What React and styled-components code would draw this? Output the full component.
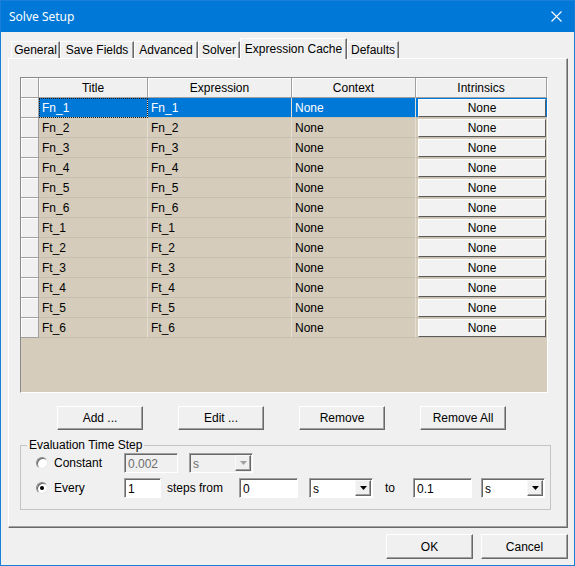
import React from "react";
import styled, { createGlobalStyle } from "styled-components";

const Global = createGlobalStyle`
  html, body { margin: 0; padding: 0; background: #ffffff; }
  body { font-family: "Liberation Sans", Arial, sans-serif; font-size: 12px; color: #000; }
  * { box-sizing: border-box; }
`;

const Window = styled.div`
  width: 575px;
  height: 566px;
  border: 1px solid #1a7fd6;
  background: #f0f0f0;
  display: flex;
  flex-direction: column;
`;

const TitleBar = styled.div`
  height: 31px;
  flex: none;
  background: #0078d7;
  color: #fff;
  display: flex;
  align-items: center;
  justify-content: space-between;
  padding-left: 8px;
  font-family: "Noto Sans", "Open Sans", sans-serif;
  font-size: 12px;
`;

const CloseBox = styled.div`
  width: 36px;
  height: 31px;
  display: flex;
  align-items: center;
  justify-content: center;
`;

const Body = styled.div`
  flex: 1;
  padding: 6px 6px 0 7px;
  display: flex;
  flex-direction: column;
`;

const TabStrip = styled.div`
  display: flex;
  align-items: flex-end;
  height: 20px;
  padding-left: 3px;
`;

const Tab = styled.div`
  position: relative;
  z-index: ${(p) => (p.$active ? 2 : 1)};
  width: ${(p) => p.$w}px;
  height: ${(p) => (p.$active ? 21 : 17)}px;
  margin-bottom: ${(p) => (p.$active ? -1 : 0)}px;
  background: #f0f0f0;
  border-top: 1px solid #ffffff;
  border-left: 1px solid #ffffff;
  border-right: 1px solid #696969;
  box-shadow: inset -1px 0 #a0a0a0;
  display: flex;
  align-items: center;
  justify-content: center;
  white-space: nowrap;
`;

const Panel = styled.div`
  width: 560px;
  height: 470px;
  border-top: 1px solid #ffffff;
  border-left: 1px solid #ffffff;
  border-right: 1px solid #696969;
  border-bottom: 1px solid #696969;
  box-shadow: inset -1px -1px #a0a0a0;
  padding: 18px 0 0 11px;
  display: flex;
  flex-direction: column;
`;

const Table = styled.div`
  width: 528px;
  height: 316px;
  flex: none;
  border-top: 1px solid #8a8a8a;
  border-left: 1px solid #8a8a8a;
  border-right: 1px solid #ffffff;
  border-bottom: 1px solid #ffffff;
  background: #d5ccbb;
  display: flex;
  flex-direction: column;
`;

const GridRow = styled.div`
  display: grid;
  grid-template-columns: 18px 109px 144px 124px 131px;
  height: 20px;
  flex: none;
`;

const HeadCell = styled.div`
  background: #f0f0f0;
  border-right: 1px solid #a0a0a0;
  border-bottom: 1px solid #a0a0a0;
  box-shadow: inset 1px 1px #ffffff;
  display: flex;
  align-items: center;
  justify-content: center;
`;

const Cell = styled.div`
  background: ${(p) => (p.$sel ? "#0078d7" : "#d5ccbb")};
  color: ${(p) => (p.$sel ? "#ffffff" : "#000000")};
  border-right: 1px solid #e3ddd2;
  border-bottom: 1px solid #c6beae;
  padding-left: 3px;
  display: flex;
  align-items: center;
  white-space: nowrap;
  outline: ${(p) => (p.$focus ? "1px dotted #1a1a1a" : "none")};
  outline-offset: -1px;
`;

const ButtonCell = styled.div`
  background: ${(p) => (p.$sel ? "#0078d7" : "#d5ccbb")};
  border-bottom: 1px solid #c6beae;
  padding: 1px 1px 0 2px;
`;

const CellButton = styled.div`
  height: 18px;
  background: #f2f2f2;
  border-top: 1px solid #ffffff;
  border-left: 1px solid #ffffff;
  border-right: 1px solid #5a5a5a;
  border-bottom: 1px solid #5a5a5a;
  display: flex;
  align-items: center;
  justify-content: center;
`;

const ButtonRow = styled.div`
  display: flex;
  gap: 35px;
  padding-left: 37px;
  margin-top: 13px;
`;

const PushButton = styled.button`
  width: ${(p) => p.$w || 86}px;
  height: ${(p) => p.$h || 24}px;
  padding: 0;
  background: #f0f0f0;
  border-top: 1px solid #ffffff;
  border-left: 1px solid #ffffff;
  border-right: 1px solid #696969;
  border-bottom: 1px solid #696969;
  box-shadow: inset -1px -1px #a0a0a0;
  font-family: "Liberation Sans", Arial, sans-serif;
  font-size: 12px;
  color: #000;
`;

const Group = styled.fieldset`
  width: 531px;
  margin: 8px 0 0 0;
  padding: 0;
  min-width: 0;
  border: 1px solid #c4c4c4;
`;

const Legend = styled.legend`
  margin-left: 6px;
  padding: 0 2px;
  line-height: 14px;
  font-size: 12px;
`;

const GroupRows = styled.div`
  display: flex;
  flex-direction: column;
  gap: 5px;
  padding: 1px 0 11px 15px;
`;

const FormRow = styled.div`
  display: flex;
  align-items: center;
  height: 20px;
`;

const RadioLabel = styled.label`
  width: 88px;
  display: flex;
  align-items: center;
  gap: 6px;
`;

const RadioDot = styled.span`
  width: 12px;
  height: 12px;
  border-radius: 50%;
  border: 1px solid;
  border-color: #8a8a8a #e8e8e8 #e8e8e8 #8a8a8a;
  box-shadow: inset 1px 1px #696969;
  background: #ffffff;
  display: flex;
  align-items: center;
  justify-content: center;
  &::after {
    content: "";
    width: 4px;
    height: 4px;
    border-radius: 50%;
    background: ${(p) => (p.$on ? "#000" : "transparent")};
  }
`;

const TextBox = styled.div`
  width: ${(p) => p.$w}px;
  margin-left: ${(p) => p.$ml || 0}px;
  height: 20px;
  border-top: 1px solid #a0a0a0;
  border-left: 1px solid #a0a0a0;
  border-right: 1px solid #ffffff;
  border-bottom: 1px solid #ffffff;
  box-shadow: inset 1px 1px #696969;
  background: ${(p) => (p.$disabled ? "#f0f0f0" : "#ffffff")};
  color: ${(p) => (p.$disabled ? "#6d6d6d" : "#000")};
  padding: 1px 0 0 3px;
  display: flex;
  align-items: center;
`;

const Combo = styled(TextBox)`
  padding: 1px 1px 0 3px;
  justify-content: space-between;
`;

const DropButton = styled.span`
  width: 16px;
  height: 16px;
  background: #f0f0f0;
  border-top: 1px solid #f8f8f8;
  border-left: 1px solid #f8f8f8;
  border-right: 1px solid #696969;
  border-bottom: 1px solid #696969;
  box-shadow: inset -1px -1px #a0a0a0;
  display: flex;
  align-items: center;
  justify-content: center;
  margin-top: -1px;
`;

const Caption = styled.span`
  width: ${(p) => p.$w}px;
  padding-left: ${(p) => p.$pl || 0}px;
  white-space: nowrap;
`;

const Footer = styled.div`
  display: flex;
  justify-content: flex-end;
  gap: 8px;
  margin-top: 6px;
`;

const tabs = [
  ["General", 49],
  ["Save Fields", 74],
  ["Advanced", 64],
  ["Solver", 42],
  ["Expression Cache", 107, true],
  ["Defaults", 52],
];

const rows = ["Fn_1", "Fn_2", "Fn_3", "Fn_4", "Fn_5", "Fn_6", "Ft_1", "Ft_2", "Ft_3", "Ft_4", "Ft_5", "Ft_6"];

function Arrow({ disabled }) {
  return (
    <svg width="7" height="4" viewBox="0 0 7 4">
      <polygon points="0,0 7,0 3.5,4" fill={disabled ? "#a0a0a0" : "#000"} />
    </svg>
  );
}

function Select({ w, ml, disabled }) {
  return (
    <Combo $w={w} $ml={ml} $disabled={disabled}>
      <span>s</span>
      <DropButton>
        <Arrow disabled={disabled} />
      </DropButton>
    </Combo>
  );
}

export default function App() {
  return (
    <>
      <Global />
      <Window>
        <TitleBar>
          <span>Solve Setup</span>
          <CloseBox>
            <svg width="11" height="11" viewBox="0 0 11 11">
              <path d="M0.5 0.5 L10.5 10.5 M10.5 0.5 L0.5 10.5" stroke="#fff" strokeWidth="1.1" />
            </svg>
          </CloseBox>
        </TitleBar>
        <Body>
          <TabStrip>
            {tabs.map(([t, w, a]) => (
              <Tab key={t} $w={w} $active={a}>
                {t}
              </Tab>
            ))}
          </TabStrip>
          <Panel>
            <Table>
              <GridRow>
                <HeadCell />
                <HeadCell>Title</HeadCell>
                <HeadCell>Expression</HeadCell>
                <HeadCell>Context</HeadCell>
                <HeadCell>Intrinsics</HeadCell>
              </GridRow>
              {rows.map((r, i) => {
                const sel = i === 0;
                return (
                  <GridRow key={r}>
                    <HeadCell />
                    <Cell $sel={sel} $focus={sel}>{r}</Cell>
                    <Cell $sel={sel}>{r}</Cell>
                    <Cell $sel={sel}>None</Cell>
                    <ButtonCell $sel={sel}>
                      <CellButton>None</CellButton>
                    </ButtonCell>
                  </GridRow>
                );
              })}
            </Table>
            <ButtonRow>
              <PushButton>Add ...</PushButton>
              <PushButton>Edit ...</PushButton>
              <PushButton>Remove</PushButton>
              <PushButton>Remove All</PushButton>
            </ButtonRow>
            <Group>
              <Legend>Evaluation Time Step</Legend>
              <GroupRows>
                <FormRow>
                  <RadioLabel>
                    <RadioDot />
                    Constant
                  </RadioLabel>
                  <TextBox $w={54} $disabled>0.002</TextBox>
                  <Select w={64} ml={11} disabled />
                </FormRow>
                <FormRow>
                  <RadioLabel>
                    <RadioDot $on />
                    Every
                  </RadioLabel>
                  <TextBox $w={37}>1</TextBox>
                  <Caption $w={78} $pl={6}>steps from</Caption>
                  <TextBox $w={59}>0</TextBox>
                  <Select w={64} ml={11} />
                  <Caption $w={40} $pl={12}>to</Caption>
                  <TextBox $w={59}>0.1</TextBox>
                  <Select w={64} ml={9} />
                </FormRow>
              </GroupRows>
            </Group>
          </Panel>
          <Footer>
            <PushButton $w={87} $h={25}>OK</PushButton>
            <PushButton $w={87} $h={25}>Cancel</PushButton>
          </Footer>
        </Body>
      </Window>
    </>
  );
}
